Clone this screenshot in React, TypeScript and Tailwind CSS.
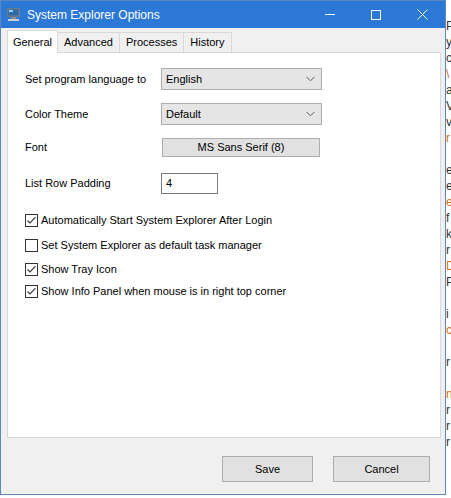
import React from "react";

const ui = { fontFamily: '"Liberation Sans", Arial, sans-serif' };

function Chevron() {
  return (
    <svg width="9" height="6" viewBox="0 0 9 6" className="mr-[6px]">
      <path d="M0.5 0.8 L4.5 4.8 L8.5 0.8" fill="none" stroke="#5a5a5a" strokeWidth="1" />
    </svg>
  );
}

function Select({ value }: { value: string }) {
  return (
    <div className="flex h-[22px] w-[161px] items-center justify-between border border-[#adadad] bg-[#e5e5e5] pl-[4px] text-black">
      <span>{value}</span>
      <Chevron />
    </div>
  );
}

function Check({ checked, label }: { checked: boolean; label: string }) {
  return (
    <div className="flex h-[16px] items-center gap-[3px]">
      <div className="flex h-[13px] w-[13px] items-center justify-center border border-[#333333] bg-white">
        {checked && (
          <svg width="11" height="11" viewBox="0 0 11 11">
            <path d="M1.5 5.5 L4 8 L9.5 2.2" fill="none" stroke="#333333" strokeWidth="1.1" />
          </svg>
        )}
      </div>
      <span className="text-black">{label}</span>
    </div>
  );
}

const TABS = ["General", "Advanced", "Processes", "History"];
const SIDE = ["P", "y", "c", "\\", "a", "V", "v", "r", "", "e", "e", "e", "f", "k", "r", "D", "P", "", "i", "c", "", "r", "", "n", "r", "r", "r"];

export default function App() {
  return (
    <div className="relative h-[498px] w-[451px] overflow-hidden bg-white text-[11px]" style={ui}>
      {/* bits of the window behind */}
      <div className="absolute left-[446px] top-[18px] flex w-[5px] flex-col overflow-hidden text-[12px] leading-[16px] text-[#333]">
        {SIDE.map((c, i) => (
          <span key={i} className={i % 4 === 3 ? "text-[#d07020]" : ""}>{c || "\u00a0"}</span>
        ))}
      </div>

      <div className="flex h-[495px] w-[446px] flex-col border border-[#5b88c0] bg-[#f0f0f0]">
        {/* Title bar */}
        <div className="flex h-[27px] shrink-0 items-center bg-[#2b78d7] text-white">
          <svg width="16" height="15" viewBox="0 0 16 15" className="ml-[5px]">
            <rect x="1" y="1" width="13" height="9" fill="#6d7b88" />
            <rect x="2.5" y="2.5" width="10" height="6" fill="#2e6aa8" />
            <rect x="3" y="3" width="4" height="2" fill="#8fd0ff" />
            <rect x="5" y="10" width="5" height="2" fill="#8a8f94" />
            <rect x="2" y="12" width="11" height="2" fill="#c9ced2" />
          </svg>
          <span className="ml-[5px] text-[12px]">System Explorer Options</span>
          <div className="ml-auto flex h-full">
            <div className="flex w-[46px] items-center justify-center">
              <div className="h-px w-[10px] bg-white" />
            </div>
            <div className="flex w-[46px] items-center justify-center">
              <div className="h-[10px] w-[10px] border border-white" />
            </div>
            <div className="flex w-[46px] items-center justify-center">
              <svg width="11" height="11" viewBox="0 0 11 11">
                <path d="M0.5 0.5 L10.5 10.5 M10.5 0.5 L0.5 10.5" stroke="white" strokeWidth="1" />
              </svg>
            </div>
          </div>
        </div>

        {/* Body */}
        <div className="flex flex-1 flex-col pl-[6px] pr-[4px] pt-[2px]">
          <div className="flex h-[22px] items-end text-black">
            {TABS.map((t, i) =>
              i === 0 ? (
                <div key={t} className="relative z-10 -mb-px flex h-[23px] w-[51px] items-center justify-center border border-b-0 border-[#d9d9d9] bg-white">
                  {t}
                </div>
              ) : (
                <div key={t} className="flex h-[20px] items-center border border-l-0 border-b-0 border-[#d9d9d9] px-[6px]">
                  {t}
                </div>
              )
            )}
          </div>
          <div className="flex h-[386px] flex-col border border-[#d9d9d9] bg-white pl-[17px] pt-[15px] text-black">
            <div className="flex h-[22px] items-center">
              <span className="w-[136px]">Set program language to</span>
              <Select value="English" />
            </div>
            <div className="mt-[13px] flex h-[22px] items-center">
              <span className="w-[136px]">Color Theme</span>
              <Select value="Default" />
            </div>
            <div className="mt-[13px] flex h-[19px] items-center">
              <span className="w-[137px]">Font</span>
              <div className="flex h-[19px] w-[158px] items-center justify-center border border-[#adadad] bg-[#e1e1e1]">
                MS Sans Serif (8)
              </div>
            </div>
            <div className="mt-[16px] flex h-[21px] items-center">
              <span className="w-[136px]">List Row Padding</span>
              <div className="flex h-[21px] w-[57px] items-center border border-[#7a7a7a] bg-white pl-[4px]">4</div>
            </div>
            <div className="mt-[18px]">
              <Check checked label="Automatically Start System Explorer After Login" />
            </div>
            <div className="mt-[9px]">
              <Check checked={false} label="Set System Explorer as default task manager" />
            </div>
            <div className="mt-[8px]">
              <Check checked label="Show Tray Icon" />
            </div>
            <div className="mt-[6px]">
              <Check checked label="Show Info Panel when mouse is in right top corner" />
            </div>
          </div>

          {/* Footer */}
          <div className="flex flex-1 items-start pt-[18px] text-black">
            <div className="ml-[215px] flex h-[26px] w-[91px] items-center justify-center border border-[#adadad] bg-[#e1e1e1]">
              Save
            </div>
            <div className="ml-[20px] flex h-[26px] w-[97px] items-center justify-center border border-[#adadad] bg-[#e1e1e1]">
              Cancel
            </div>
          </div>
        </div>
      </div>
    </div>
  );
}
